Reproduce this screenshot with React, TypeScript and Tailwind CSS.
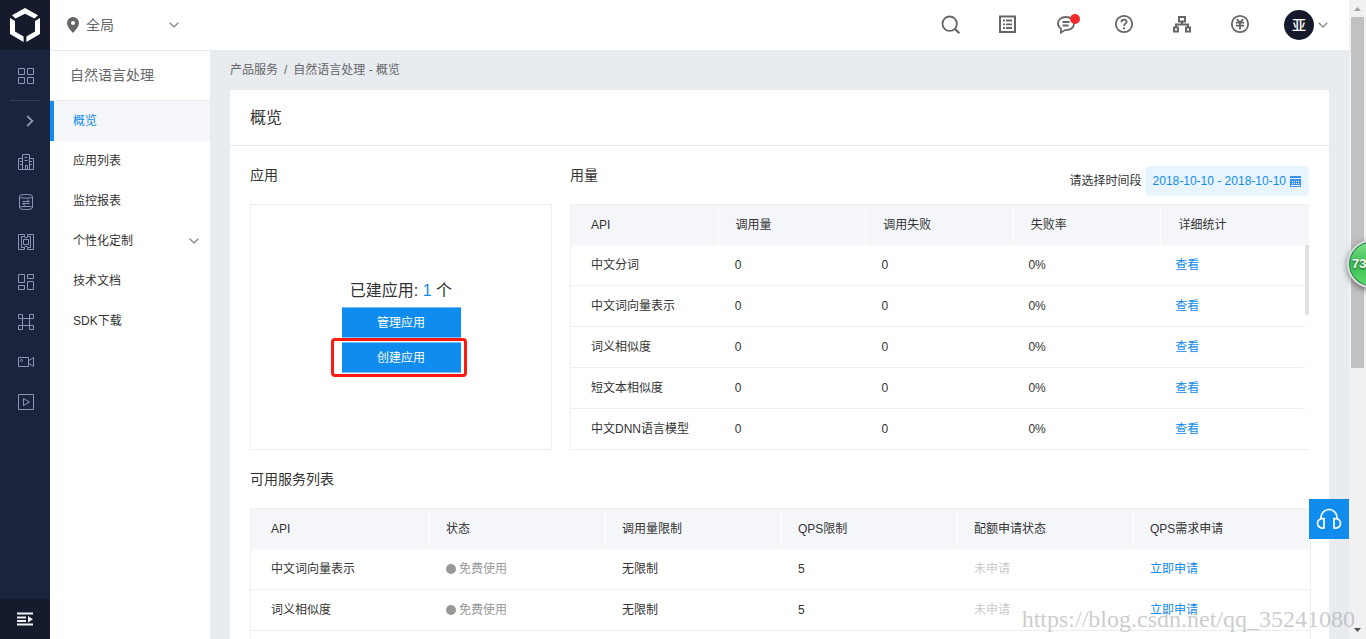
import type { ReactNode } from "react"
import { clsx } from "clsx"

const MENU = [
  { id: "overview", label: "概览", active: true },
  { id: "apps", label: "应用列表" },
  { id: "monitor", label: "监控报表" },
  { id: "custom", label: "个性化定制", expandable: true },
  { id: "docs", label: "技术文档" },
  { id: "sdk", label: "SDK下载" },
]

const USAGE_COLUMNS = ["API", "调用量", "调用失败", "失败率", "详细统计"]

const USAGE = [
  { name: "中文分词", calls: 0, failed: 0, rate: "0%" },
  { name: "中文词向量表示", calls: 0, failed: 0, rate: "0%" },
  { name: "词义相似度", calls: 0, failed: 0, rate: "0%" },
  { name: "短文本相似度", calls: 0, failed: 0, rate: "0%" },
  { name: "中文DNN语言模型", calls: 0, failed: 0, rate: "0%" },
]

const SERVICE_COLUMNS = ["API", "状态", "调用量限制", "QPS限制", "配额申请状态", "QPS需求申请"]

const SERVICES = [
  { name: "中文词向量表示", status: "免费使用", limit: "无限制", qps: 5, quota: "未申请" },
  { name: "词义相似度", status: "免费使用", limit: "无限制", qps: 5, quota: "未申请" },
]

// Line icons for the dark rail, all on an 18px grid
const RAIL_ICONS: { id: string; label: string; shape: ReactNode }[] = [
  {
    id: "compute",
    label: "计算",
    shape: <path d="M5.5 16.5v-15h7v15M5.5 5.5h-4v11h15v-11h-4M8.5 16.5v-4h2v4M7.5 4.5h3M7.5 7.5h3M3 8.5h2M3 11.5h2M13 8.5h2M13 11.5h2" />,
  },
  {
    id: "storage",
    label: "存储",
    shape: (
      <>
        <path d="M2.5 3.5c0-1.300 2-2 6.500-2s6.500.7 6.500 2v11c0 1.300-2 2-6.500 2s-6.500-.7-6.500-2z" />
        <path d="M2.500 3.500l2 1.500h9l2-1.500M2.500 14.500l2-1h9l2 1" />
        <path d="M5.500 8.500h7l-2.500-2M12.500 10.500h-7l2.500 2" />
      </>
    ),
  },
  {
    id: "network",
    label: "网络",
    shape: <path d="M7.5 1.5h-6v15h6v-2h-3v-11h3zM10.5 1.5h6v15h-6v-2h3v-11h-3zM6.5 6.5h5v5h-5zM7.5 4.5h3M7.5 13.5h3" />,
  },
  {
    id: "modules",
    label: "模块",
    shape: <path d="M1.5 1.5h6v8h-6zM10.5 1.5h6v4h-6zM1.5 12.5h6v4h-6zM10.5 8.5h6v8h-6z" />,
  },
  {
    id: "nodes",
    label: "节点",
    shape: (
      <path d="M1.5 1.5h4v4h-4zM12.5 1.5h4v4h-4zM1.5 12.5h4v4h-4zM12.5 12.5h4v4h-4zM5.5 5.5v7M12.5 5.5v7M5.5 5.5h7M5.5 12.5h7" />
    ),
  },
  {
    id: "camera",
    label: "视频",
    shape: (
      <>
        <path d="M1.5 4.5h10v9h-10zM12 7.5l4.5-3v9l-4.5-3" />
        <circle cx="4.5" cy="7.5" r="1" />
      </>
    ),
  },
  {
    id: "play",
    label: "播放",
    shape: <path d="M1.5 1.5h15v15h-15zM6.5 5.5v7l6-3.5z" />,
  },
]

function RailIcon({ children }: { children: ReactNode }) {
  return (
    <svg width="18" height="18" viewBox="0 0 18 18" fill="none" stroke="currentColor" aria-hidden="true">
      {children}
    </svg>
  )
}

function ChevronDown() {
  return (
    <svg width="10" height="6" viewBox="0 0 10 6" fill="none" stroke="#8c8c8c" strokeWidth="1.4" aria-hidden="true">
      <path d="M0.7 0.7L5 5L9.3 0.7" />
    </svg>
  )
}

function IconRail() {
  return (
    <nav className="flex w-[50px] shrink-0 flex-col bg-[#1b243d] text-[#8b97b5]">
      <a href="#home" aria-label="首页" className="flex h-[50px] shrink-0 items-center justify-center bg-[#151b2c]">
        <svg width="32" height="36" viewBox="0 0 32 36" fill="#fff" aria-hidden="true">
          <path d="M16 1L29 8.2L25.5 11.5L16 6.8L6.5 11.5L3 8.2z" />
          <path d="M1 11L6 14V24.5L14.6 29.5V35L1 27z" />
          <path d="M31 11L26 14V24.5L17.4 29.5V35L31 27z" />
        </svg>
      </a>
      <div className="flex flex-1 flex-col pt-[6px]">
        <button type="button" aria-label="产品" className="mb-1 flex h-10 w-full items-center justify-center pl-[2px]">
          <RailIcon>
            <path d="M1.5 1.5h6v6h-6zM10.5 1.5h6v6h-6zM1.5 10.5h6v6h-6zM10.5 10.5h6v6h-6z" />
          </RailIcon>
        </button>
        <div className="mx-[10px] h-px bg-[#323d5a]" />
        <button type="button" aria-label="展开" className="mb-px flex h-10 w-full items-center justify-center pl-[10px]">
          <svg width="8" height="12" viewBox="0 0 8 12" fill="none" stroke="currentColor" strokeWidth="1.8" aria-hidden="true">
            <path d="M1.2 1L6.4 6L1.2 11" />
          </svg>
        </button>
        {RAIL_ICONS.map((icon) => (
          <a
            key={icon.id}
            href={`#${icon.id}`}
            aria-label={icon.label}
            className="flex h-10 items-center justify-center pl-[2px]"
          >
            <RailIcon>{icon.shape}</RailIcon>
          </a>
        ))}
      </div>
      <button type="button" aria-label="收起" className="flex h-10 w-full shrink-0 items-center justify-center bg-[#151b2c]">
        <svg width="16" height="14" viewBox="0 0 16 14" fill="#f0f2f5" aria-hidden="true">
          <path d="M0 0.5h16v2H0zM0 4.5h9v2H0zM0 8h9v2H0zM0 11.5h16v2H0zM11 4l5 3.3l-5 3.2z" />
        </svg>
      </button>
    </nav>
  )
}

function HeaderButton({ label, children }: { label: string; children: ReactNode }) {
  return (
    <button type="button" aria-label={label} className="flex h-[50px] w-[58px] items-center justify-center">
      <svg
        width="22"
        height="20"
        viewBox="-1 1 22 20"
        fill="none"
        stroke="#666"
        strokeWidth="1.8"
        className="overflow-visible"
        aria-hidden="true"
      >
        {children}
      </svg>
    </button>
  )
}

function Header() {
  return (
    <header className="flex h-[51px] shrink-0 items-center border-b border-[#e6e9ef] bg-white">
      <button type="button" className="flex w-[129px] items-center pl-[17px] text-sm text-[#666]">
        <svg width="12" height="16" viewBox="0 0 12 16" className="mr-[7px]" aria-hidden="true">
          <path fill="#666" fillRule="evenodd" d="M6 0a6 6 0 0 1 6 6c0 3-3 7-6 10C3 13 0 9 0 6a6 6 0 0 1 6-6zm0 4a2 2 0 1 0 0 4a2 2 0 0 0 0-4z" />
        </svg>
        <span className="flex-1 text-left">全局</span>
        <ChevronDown />
      </button>

      <div className="ml-auto flex items-center">
        <HeaderButton label="搜索">
          <circle cx="9.7" cy="9.7" r="7.2" />
          <path d="M14.8 14.8l4.500 4.500" strokeWidth="2.2" />
        </HeaderButton>
        <HeaderButton label="工单">
          <path d="M2 2.500h15v15.500h-15z" strokeWidth="2" />
          <path d="M5 6.500h2M8 6.500h6M5 10.300h2M8 10.300h6M5 14h2M8 14h6" strokeWidth="1.8" />
        </HeaderButton>
        <HeaderButton label="消息">
          <path d="M10 3c-5 0-8 3-8 6.500c0 2.300 1 4 3 5.200v4l4-2.600c6 .3 9-3 9-6.600C18 6 15 3 10 3z" />
          <path d="M6.5 8h7M6.500 11.500h6" />
          <circle cx="19" cy="5" r="5" fill="#f12b2b" stroke="none" />
        </HeaderButton>
        <HeaderButton label="帮助">
          <circle cx="10" cy="10" r="8.2" />
          <path d="M7.4 8.2c0-3.6 5.4-3.4 5.2-.3c-.1 1.7-2.6 1.9-2.6 4M10 13.2v2" />
        </HeaderButton>
        <HeaderButton label="组织">
          <path d="M7 3h6v4.500H7zM2 13.500h4v4H2zM14 13.500h4v4h-4zM10 7.500v3M4 13.500v-3h12v3" strokeWidth="2" />
        </HeaderButton>
        <HeaderButton label="费用">
          <circle cx="10" cy="10" r="8.2" />
          <path d="M6.8 5.2l3.2 3.3l3.2-3.3M5.8 8.7h8.4M5.8 11.7h8.4M10 8.5v7" />
        </HeaderButton>
        <button type="button" className="ml-[15px] flex items-center gap-1 pr-[21px]">
          <span className="flex size-[30px] items-center justify-center rounded-full bg-[#151b2c] text-sm font-medium text-white">
            亚
          </span>
          <ChevronDown />
        </button>
      </div>
    </header>
  )
}

function SideMenu() {
  return (
    <aside className="w-40 shrink-0 bg-white">
      <h2 className="h-[50px] border-b border-[#e6e9ef] pl-5 text-sm leading-[48px] text-[#666]">自然语言处理</h2>
      <ul>
        {MENU.map((item) => (
          <li key={item.id}>
            <a
              href={`#${item.id}`}
              className={clsx(
                "flex h-10 items-center justify-between border-l-4 pr-[11px] pl-[19px]",
                item.active ? "border-[#108cee] bg-[#f5f6fa] text-[#108cee]" : "border-transparent text-[#333]"
              )}
            >
              {item.label}
              {item.expandable && <ChevronDown />}
            </a>
          </li>
        ))}
      </ul>
    </aside>
  )
}

function AppsPanel() {
  return (
    <section className="flex w-[302px] shrink-0 flex-col">
      <h3 className="mb-2 h-[30px] text-sm leading-[18px]">应用</h3>
      <div className="flex flex-1 flex-col items-center border border-[#eee] pt-[74px]">
        <p className="mb-1 text-base leading-6">
          已建应用: <span className="text-[#108cee]">1</span> 个
        </p>
        <button type="button" className="mb-1 h-[31px] w-[119px] border-y border-[#75bbf5] bg-[#108cee] pt-px text-white">
          管理应用
        </button>
        <div className="relative">
          <button type="button" className="block h-[31px] w-[119px] border-y border-[#75bbf5] bg-[#108cee] pt-px text-white">
            创建应用
          </button>
          <div className="pointer-events-none absolute -top-1 -right-[6px] -bottom-1 -left-[11px] rounded-[4px] border-3 border-[#ff1a0f]" />
        </div>
      </div>
    </section>
  )
}

function UsagePanel() {
  return (
    <section className="min-w-0 flex-1">
      <div className="mb-2 flex h-[30px] justify-between">
        <h3 className="text-sm leading-[18px]">用量</h3>
        <div className="flex items-center gap-[3px]">
          <label htmlFor="period">请选择时间段</label>
          <button
            id="period"
            type="button"
            className="flex h-[30px] items-center gap-1 rounded-[5px] bg-[#e8f5fe] px-2 text-[#108cee]"
          >
            2018-10-10 - 2018-10-10
            <svg width="11" height="11" viewBox="0 0 11 11" aria-hidden="true">
              <path fill="#3c92ef" d="M0 0h11v2H0zM0 3h11v8H0z" />
              <path fill="#fff" d="M2 5h1v1H2zM4 5h1v1H4zM6 5h1v1H6zM8 5h1v1H8zM2 7h1v1H2zM4 7h1v1H4zM6 7h1v1H6zM8 7h1v1H8zM1 9h9v1H1z" />
            </svg>
          </button>
        </div>
      </div>
      <div className="relative border-y border-l border-[#eee]">
        <table className="block">
          <thead className="block">
            <tr className="table w-full table-fixed border-separate border-spacing-0">
              {USAGE_COLUMNS.map((column) => (
                <th
                  key={column}
                  className="h-10 border-r border-white bg-[#f5f6fa] px-[17px] text-left font-normal first:pl-5 last:border-r-0"
                >
                  {column}
                </th>
              ))}
            </tr>
          </thead>
          <tbody className="group block pr-1">
            {USAGE.map((row) => (
              <tr
                key={row.name}
                className="table w-full table-fixed border-separate border-spacing-0 *:h-[41px] *:border-b *:border-[#eceef5] *:px-[17px] *:first:pl-5 last:*:h-10 last:*:border-b-0"
              >
                <td>{row.name}</td>
                <td>{row.calls}</td>
                <td>{row.failed}</td>
                <td>{row.rate}</td>
                <td>
                  <a href="#detail" className="text-[#108cee]">查看</a>
                </td>
              </tr>
            ))}
          </tbody>
        </table>
        <div className="absolute top-10 right-0 h-[70px] w-1 rounded-b-sm bg-[#e2e2e2]" />
      </div>
    </section>
  )
}

function ServicesPanel() {
  return (
    <section className="-mr-0.5 pt-5">
      <h3 className="mb-5 text-sm leading-[18px]">可用服务列表</h3>
      <div className="border border-[#eee] pb-10">
        <table className="w-full table-fixed border-separate border-spacing-0">
          <thead>
            <tr>
              {SERVICE_COLUMNS.map((column) => (
                <th
                  key={column}
                  className="h-10 border-r border-white bg-[#f5f6fa] px-4 text-left font-normal first:w-[179px] first:pl-5 last:border-r-0"
                >
                  {column}
                </th>
              ))}
            </tr>
          </thead>
          <tbody>
            {SERVICES.map((row) => (
              <tr key={row.name} className="*:h-[41px] *:border-b *:border-[#eceef5] *:px-4 *:first:pl-5">
                <td>{row.name}</td>
                <td className="text-[#999]">
                  <span className="flex items-center gap-[3px]">
                    <span className="size-[10px] rounded-full bg-[#999]" />
                    {row.status}
                  </span>
                </td>
                <td>{row.limit}</td>
                <td>{row.qps}</td>
                <td className="text-[#ccc]">{row.quota}</td>
                <td>
                  <a href="#apply" className="text-[#108cee]">立即申请</a>
                </td>
              </tr>
            ))}
          </tbody>
        </table>
      </div>
    </section>
  )
}

function ScrollTrack() {
  return (
    <div className="flex w-[17px] shrink-0 flex-col items-center bg-[#f1f1f1]" aria-hidden="true">
      <svg width="17" height="17" viewBox="0 0 17 17">
        <path fill="#a3a3a3" d="M5 11h7L8.5 7z" />
      </svg>
      <div className="w-full flex-1 px-[2px]">
        <div className="h-[58%] bg-[#c1c1c1]" />
      </div>
      <svg width="17" height="17" viewBox="0 0 17 17">
        <path fill="#505050" d="M5 6h7l-3.5 4z" />
      </svg>
    </div>
  )
}

export default function App() {
  return (
    <div className="relative flex h-screen overflow-hidden bg-[#e8ebf0] font-['Liberation_Sans','Noto_Sans_CJK_SC',sans-serif] text-xs text-[#333]">
      <IconRail />
      <div className="flex min-w-0 flex-1 flex-col">
        <Header />
        <div className="flex min-h-0 flex-1">
          <SideMenu />
          <main className="min-w-0 flex-1 overflow-hidden px-5">
            <nav aria-label="面包屑" className="flex h-[39px] items-center gap-[6px] pb-[2px] text-[#666]">
              <a href="#products">产品服务</a>
              <span>/</span>
              <span>自然语言处理 - 概览</span>
            </nav>
            <div className="bg-white">
              <h1 className="flex h-14 items-center border-b border-[#e6e9ef] px-5 text-base">概览</h1>
              <div className="p-5">
                <div className="flex gap-[18px]">
                  <AppsPanel />
                  <UsagePanel />
                </div>
                <ServicesPanel />
              </div>
            </div>
          </main>
        </div>
      </div>
      <ScrollTrack />

      <button
        type="button"
        aria-label="客服"
        className="absolute right-[17px] bottom-[100px] flex size-10 items-center justify-center bg-[#108cee]"
      >
        <svg width="26" height="22" viewBox="0 0 26 22" fill="none" stroke="#fff" strokeWidth="1.7" aria-hidden="true">
          <path d="M5 11V9.500a8 8 0 0 1 16 0V11" />
          <path d="M8 10.500v9.500c-4 .5-6.500-1.500-6.500-4.700s2.500-5 6.500-4.800zM18 10.500v9.500c4 .5 6.500-1.500 6.500-4.700s-2.500-5-6.500-4.800z" />
        </svg>
      </button>

      <div className="absolute top-60 -right-[29px] flex size-12 items-center rounded-full border-2 border-[#ddd] bg-[#1a8a4c] p-px shadow-[0_2px_6px_rgba(0,0,0,0.5)]">
        <span className="flex size-full items-center rounded-full bg-linear-to-b from-[#7fe08a] via-[#35bd50] to-[#5fd96b] pl-[2px] text-[13px] font-bold text-white [text-shadow:0_1px_2px_rgba(0,0,0,0.6)]">
          73
        </span>
      </div>

      <p className="pointer-events-none absolute right-[11px] bottom-[8px] font-['Liberation_Serif',serif] text-2xl leading-6 text-[#999]/50">
        https://blog.csdn.net/qq_35241080
      </p>
    </div>
  )
}
